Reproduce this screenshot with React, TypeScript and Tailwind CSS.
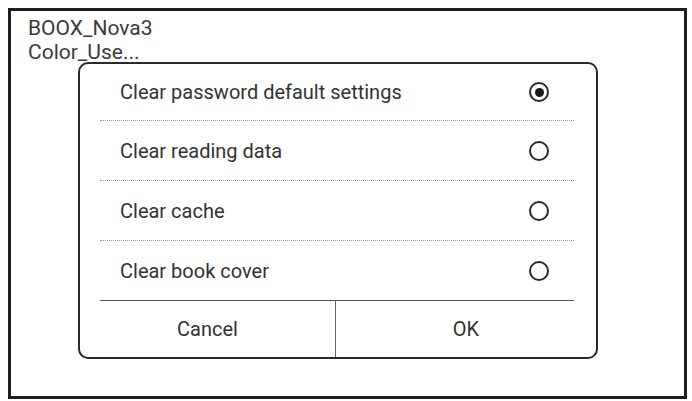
import React from "react";

const items = [
  { label: "Clear password default settings", checked: true },
  { label: "Clear reading data", checked: false },
  { label: "Clear cache", checked: false },
  { label: "Clear book cover", checked: false },
];

function Radio({ checked }: { checked: boolean }) {
  return (
    <div className="w-[20px] h-[20px] rounded-full border-2 border-[#2a2a2a] flex items-center justify-center">
      {checked && <div className="w-[9px] h-[9px] rounded-full bg-[#1a1a1a]" />}
    </div>
  );
}

export default function App() {
  return (
    <div className="w-[692px] h-[401px] bg-white pl-[8px] pt-[8px]" style={{ fontFamily: "Roboto, 'Liberation Sans', sans-serif" }}>
      <div className="relative w-[679px] h-[391px] border-[3px] border-[#1e1e1e] bg-white">
        <div className="pl-[17px] pt-[5px] text-[21px] leading-[24px] text-[#3a3a3a]">
          <div>BOOX_Nova3</div>
          <div>Color_Use...</div>
        </div>
        <div className="absolute left-[67px] top-[51px] w-[520px] h-[297px] border-2 border-[#2a2a2a] rounded-[10px] bg-white flex flex-col">
          <div className="pl-[20px] pr-[22px] pt-0">
            {items.map((it, i) => (
              <div
                key={i}
                className={
                  (i === 0 ? "h-[57px] " : "h-[60px] ") +
                  (i === 3
                    ? "border-b border-[#555555] "
                    : "border-b border-dotted border-[#9a9a9a] ") +
                  "flex items-center justify-between pl-[20px] pr-[25px]"
                }
              >
                <span className="text-[20px] text-[#333333]">{it.label}</span>
                <Radio checked={it.checked} />
              </div>
            ))}
          </div>
          <div className="flex flex-1">
            <div className="w-[256px] flex items-center justify-center text-[20px] text-[#333333] border-r border-[#666666]">
              Cancel
            </div>
            <div className="flex-1 flex items-center justify-center text-[20px] text-[#333333]">OK</div>
          </div>
        </div>
      </div>
    </div>
  );
}
